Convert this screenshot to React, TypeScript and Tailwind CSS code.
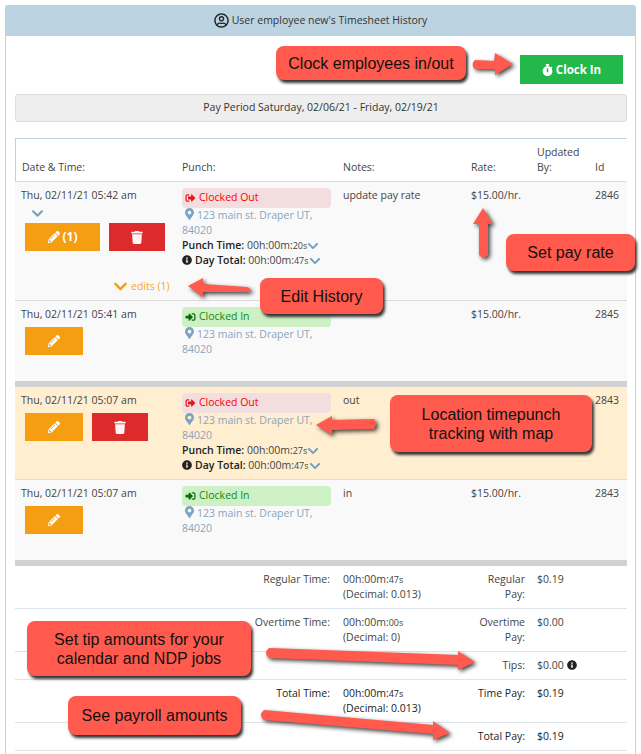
import React from "react";
import {
  FaRegUserCircle,
  FaStopwatch,
  FaPencilAlt,
  FaTrash,
  FaSignOutAlt,
  FaSignInAlt,
  FaMapMarkerAlt,
  FaInfoCircle,
  FaChevronDown,
} from "react-icons/fa";

const cols = "grid grid-cols-[167px_161px_128px_66px_58px_32px]";

function Editbtn({ w = "w-[58px]", label }: { w?: string; label?: string }) {
  return (
    <div className={`${w} h-[28px] bg-[#f59e12] text-white flex items-center justify-center gap-[3px] text-[12px] font-bold`}>
      <FaPencilAlt className="w-[12px] h-[12px]" />
      {label && <span>{label}</span>}
    </div>
  );
}

function TrashBtn() {
  return (
    <div className="w-[56px] h-[28px] bg-[#dd2a2a] text-white flex items-center justify-center">
      <FaTrash className="w-[12px] h-[13px] text-[#fff3f3]" />
    </div>
  );
}

function Chevron({ className = "w-[12px] h-[12px] align-[-3px]" }: { className?: string }) {
  return <FaChevronDown className={`inline-block text-[#74a0c0] ${className}`} />;
}

function Punch({ out, pt, dt }: { out: boolean; pt?: string; dt?: string }) {
  return (
    <div className="w-[149px]">
      {out ? (
        <div className="h-[20px] rounded-[4px] bg-[#f2dede] text-[#ff0000] flex items-center pl-[3px] gap-[3px]">
          <FaSignOutAlt className="w-[11px] h-[10px] text-[#e8141c]" />
          <span>Clocked Out</span>
        </div>
      ) : (
        <div className="h-[20px] rounded-[4px] bg-[#cdf1c4] text-[#0e8a0e] flex items-center pl-[3px] gap-[3px]">
          <FaSignInAlt className="w-[11px] h-[10px] text-[#0b6b0b]" />
          <span>Clocked In</span>
        </div>
      )}
      <div className="text-[#8ba3bd] leading-[15px]">
        <FaMapMarkerAlt className="inline-block w-[9px] h-[12px] ml-[3px] mr-[3px] text-[#7ba3c4] align-[-1px]" />
        123 main st. Draper UT, 84020
      </div>
      {pt && (
        <div className="leading-[15px] whitespace-nowrap">
          <span className="font-semibold text-[#222]">Punch Time:</span> 00h:00m:<span className="text-[9px]">{pt}</span>
          <Chevron />
        </div>
      )}
      {dt && (
        <div className="leading-[15px] whitespace-nowrap">
          <FaInfoCircle className="inline-block w-[10px] h-[10px] mr-[3px] text-[#222] align-[-1px]" />
          <span className="font-semibold text-[#222]">Day Total:</span> 00h:00m:<span className="text-[9px]">{dt}</span>
          <Chevron />
        </div>
      )}
    </div>
  );
}

function Row({
  h,
  bg,
  border = true,
  date,
  chevron,
  buttons,
  punch,
  note,
  rate,
  id,
  extra,
}: {
  h: string;
  bg: string;
  border?: boolean;
  date: string;
  chevron?: boolean;
  buttons: React.ReactNode;
  punch: React.ReactNode;
  note?: string;
  rate?: string;
  id: string;
  extra?: React.ReactNode;
}) {
  return (
    <div className={`${h} ${bg} ${border ? "border-t border-[#dcdcdc]" : ""} pt-[6px]`}>
      <div className={cols}>
        <div className="pl-[6px]">
          <div className="leading-[15px]">{date}</div>
          {chevron && (
            <div className="h-[20px] pl-[10px] flex items-center">
              <Chevron className="w-[13px] h-[13px]" />
            </div>
          )}
          <div className={`${chevron ? "" : "mt-[5px]"} ml-[4px] flex gap-[9px]`}>{buttons}</div>
        </div>
        <div>{punch}</div>
        <div className="leading-[15px]">{note}</div>
        <div className="leading-[15px]">{rate}</div>
        <div />
        <div className="leading-[15px]">{id}</div>
      </div>
      {extra}
    </div>
  );
}

function SumRow({
  h,
  label,
  value,
  dec,
  payLabel,
  pay,
  strong,
  info,
}: {
  h: string;
  label?: string;
  value?: string;
  dec?: string;
  payLabel: string;
  pay: string;
  strong?: boolean;
  info?: boolean;
}) {
  const s = strong ? "font-medium text-[#222]" : "";
  return (
    <div className={`${h} ${cols} border-b border-[#dde4ea] pt-[6px] leading-[15px]`}>
      <div className={`col-span-2 text-right pr-[13px] ${s}`}>{label}</div>
      <div className={s}>
        {value && (
          <>
            <div>
              00h:00m:<span className="text-[9px]">{value}</span>
            </div>
            <div>(Decimal: {dec})</div>
          </>
        )}
      </div>
      <div className={`text-right pr-[12px] ${s}`}>{payLabel}</div>
      <div className={`col-span-2 flex items-start gap-[3px] ${s}`}>
        <span>{pay}</span>
        {info && <FaInfoCircle className="w-[10px] h-[10px] mt-[2px] text-[#222]" />}
      </div>
    </div>
  );
}

function Callout({ pos, children }: { pos: string; children: React.ReactNode }) {
  return (
    <div
      className={`absolute ${pos} bg-[#ff5a4d] rounded-[8px] shadow-[2px_3px_3px_#333] flex items-center justify-center text-center text-[16px] leading-[19px] text-[#111]`}
      style={{ fontFamily: '"Liberation Sans", Arial, sans-serif' }}
    >
      {children}
    </div>
  );
}

export default function App() {
  return (
    <div
      className="relative w-[641px] h-[754px] overflow-hidden bg-white text-[10.5px] text-[#444]"
      style={{ fontFamily: '"Open Sans", sans-serif' }}
    >
      <div className="mx-[5px] mt-[5px] h-[749px] border-x border-[#bcd3e2] rounded-t-[3px]">
        <div className="-mx-[1px] h-[31px] bg-[#bcd3e2] rounded-t-[3px] flex items-center justify-center gap-[3px] text-[#333]">
          <FaRegUserCircle className="w-[15px] h-[15px] text-[#222]" />
          <span>User employee new's Timesheet History</span>
        </div>
        <div className="pl-[9px] pr-[8px]">
          <div className="flex justify-end pt-[19px] pr-[4px]">
            <div className="w-[103px] h-[29px] bg-[#22b84a] text-white font-bold text-[11.5px] flex items-center justify-center gap-[3px]">
              <FaStopwatch className="w-[11px] h-[12px]" />
              <span>Clock In</span>
            </div>
          </div>
          <div className="mt-[10px] h-[28px] bg-[#eeeeee] border border-[#dddddd] rounded-[3px] flex items-center justify-center text-[#333]">
            Pay Period Saturday, 02/06/21 - Friday, 02/19/21
          </div>
          <div className="mt-[16px] h-[43px] border-t border-l border-[#bcd3e2] grid grid-cols-[166px_161px_128px_66px_58px_32px] items-end pb-[6px] leading-[15px]">
            <div className="pl-[6px]">Date &amp; Time:</div>
            <div>Punch:</div>
            <div>Notes:</div>
            <div>Rate:</div>
            <div>
              Updated
              <br />
              By:
            </div>
            <div>Id</div>
          </div>

          <Row
            h="h-[119px]"
            bg="bg-[#f9f9f9]"
            date="Thu, 02/11/21 05:42 am"
            chevron
            buttons={
              <>
                <Editbtn w="w-[75px]" label="(1)" />
                <TrashBtn />
              </>
            }
            punch={<Punch out pt="20s" dt="47s" />}
            note="update pay rate"
            rate="$15.00/hr."
            id="2846"
            extra={
              <div className="mt-[11px] pl-[98px] flex items-center gap-[3px] leading-[15px] text-[#f7a823]">
                <FaChevronDown className="w-[15px] h-[15px] text-[#f59e12]" />
                <span>edits (1)</span>
              </div>
            }
          />
          <Row
            h="h-[81px]"
            bg="bg-[#f9f9f9]"
            date="Thu, 02/11/21 05:41 am"
            buttons={<Editbtn />}
            punch={<Punch out={false} />}
            rate="$15.00/hr."
            id="2845"
          />
          <div className="h-[6px] bg-[#d2d2d2]" />
          <Row
            h="h-[92px]"
            bg="bg-[#ffeed0]"
            border={false}
            date="Thu, 02/11/21 05:07 am"
            buttons={
              <>
                <Editbtn />
                <TrashBtn />
              </>
            }
            punch={<Punch out pt="27s" dt="47s" />}
            note="out"
            id="2843"
          />
          <Row
            h="h-[81px]"
            bg="bg-[#f9f9f9]"
            date="Thu, 02/11/21 05:07 am"
            buttons={<Editbtn />}
            punch={<Punch out={false} />}
            note="in"
            rate="$15.00/hr."
            id="2843"
          />
          <div className="h-[6px] bg-[#d2d2d2]" />

          <SumRow h="h-[43px]" label="Regular Time:" value="47s" dec="0.013" payLabel="Regular Pay:" pay="$0.19" />
          <SumRow h="h-[43px]" label="Overtime Time:" value="00s" dec="0" payLabel="Overtime Pay:" pay="$0.00" />
          <SumRow h="h-[28px]" payLabel="Tips:" pay="$0.00" info />
          <SumRow h="h-[43px]" label="Total Time:" value="47s" dec="0.013" payLabel="Time Pay:" pay="$0.19" strong />
          <SumRow h="h-[28px]" payLabel="Total Pay:" pay="$0.19" strong />
        </div>
      </div>

      <svg
        className="absolute left-0 top-0 drop-shadow-[2px_2px_2px_rgba(0,0,0,0.75)]"
        width="641"
        height="754"
        viewBox="0 0 641 754"
      >
        <g fill="#ff5a4d">
          <path d="M475 60 L494 61 L495 53 L513 64 L495 75 L495 69 L475 69 Q470 64 475 60 Z" />
          <path d="M483 208 L493 224 L488 224 L488 255 Q484 260 479 255 L479 224 L473 224 Z" />
          <path d="M188 286 L203 278 L203 284 L247 287 Q252 289 250 292 L203 292 L203 297 Z" />
          <path d="M316 425 L332 416 L332 420 L374 419 Q378 424 374 429 L332 430 L332 435 Z" />
          <path d="M269 648 L458 655 L458 651 L475 662 L458 670 L458 665 L269 658 Q263 653 269 648 Z" />
          <path d="M264 710 L433 725 L433 721 L450 733 L433 740 L433 734 L264 720 Q258 715 264 710 Z" />
        </g>
      </svg>

      <Callout pos="left-[276px] top-[46px] w-[190px] h-[34px]">Clock employees in/out</Callout>
      <Callout pos="left-[260px] top-[278px] w-[123px] h-[36px]">Edit History</Callout>
      <Callout pos="left-[506px] top-[234px] w-[129px] h-[37px]">Set pay rate</Callout>
      <Callout pos="left-[390px] top-[395px] w-[202px] h-[57px]">
        Location timepunch
        <br />
        tracking with map
      </Callout>
      <Callout pos="left-[27px] top-[621px] w-[224px] h-[55px]">
        Set tip amounts for your
        <br />
        calendar and NDP jobs
      </Callout>
      <Callout pos="left-[68px] top-[696px] w-[173px] h-[39px]">See payroll amounts</Callout>
    </div>
  );
}
